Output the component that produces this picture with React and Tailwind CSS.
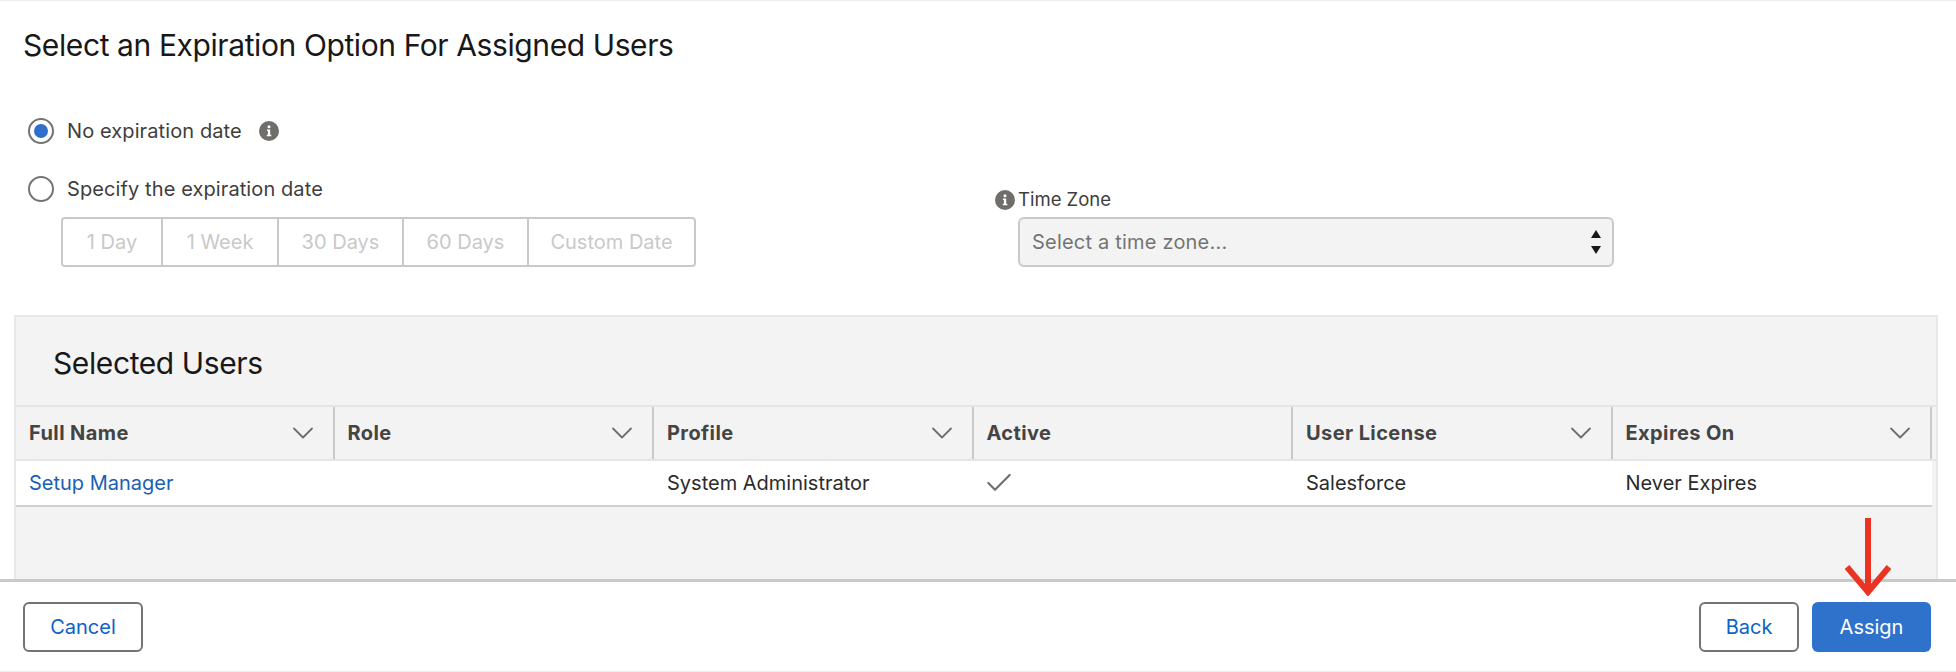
import { ChevronDown, Check } from 'lucide-react';

const font = { fontFamily: 'Inter, "Liberation Sans", sans-serif' };

const columns = [
  { label: 'Full Name', sortable: true },
  { label: 'Role', sortable: true },
  { label: 'Profile', sortable: true },
  { label: 'Active', sortable: false },
  { label: 'User License', sortable: true },
  { label: 'Expires On', sortable: true },
];

const durations = [
  { label: '1 Day', width: 'w-[100px]' },
  { label: '1 Week', width: 'w-[116px]' },
  { label: '30 Days', width: 'w-[125px]' },
  { label: '60 Days', width: 'w-[125px]' },
  { label: 'Custom Date', width: 'w-[167px]' },
];

const InfoIcon = () => (
  <svg width="20" height="20" viewBox="0 0 20 20" className="shrink-0">
    <circle cx="10" cy="10" r="10" fill="#706e6b" />
    <circle cx="10" cy="5.8" r="1.5" fill="#fff" />
    <path d="M8 8.6h3.2v5.2h1.1v1.5H7.8v-1.5h1.1v-3.7H8z" fill="#fff" />
  </svg>
);

const Radio = ({ checked }) => (
  <span className="w-[26px] h-[26px] rounded-full border-2 border-[#747474] bg-white flex items-center justify-center shrink-0">
    {checked && <span className="w-[14px] h-[14px] rounded-full bg-[#2f6fca]" />}
  </span>
);

export default function App() {
  return (
    <div style={font} className="relative w-[1956px] h-[672px] bg-white flex flex-col overflow-hidden text-[#3e3e3c] border-t border-[#ececec]">
      <div className="flex-1 min-h-0 flex flex-col">
        <h1 className="ml-[23px] mt-[26px] h-[36px] leading-[36px] text-[30px] tracking-[-0.4px] text-[#181818]">
          Select an Expiration Option For Assigned Users
        </h1>

        <div className="mt-[55px] flex items-start">
          <div className="ml-[28px] w-[977px] shrink-0">
            <div className="flex items-center h-[26px] gap-[13px]">
              <Radio checked />
              <span className="text-[20px] leading-none tracking-[0.1px]">No expiration date</span>
              <span className="ml-[4px]"><InfoIcon /></span>
            </div>
            <div className="flex items-center h-[26px] gap-[13px] mt-[32px]">
              <Radio />
              <span className="text-[20px] leading-none tracking-[0.1px]">Specify the expiration date</span>
            </div>
            <div className="ml-[33px] mt-[15px] flex h-[50px] border-2 border-[#c9c9c9] rounded-[4px] w-[635px]">
              {durations.map((d, i) => (
                <div
                  key={d.label}
                  className={`${d.width} flex items-center justify-center text-[20px] text-[#c9c9c9] ${i < durations.length - 1 ? 'border-r-2 border-[#c9c9c9]' : 'flex-1'}`}
                >
                  {d.label}
                </div>
              ))}
            </div>
          </div>

          <div className="mt-[69px]">
            <div className="flex items-center gap-[3px] h-[26px] -ml-[10px]">
              <InfoIcon />
              <span className="text-[18.5px]">Time Zone</span>
            </div>
            <div className="ml-[13px] mt-[4px] w-[596px] h-[50px] rounded-[6px] border-2 border-[#c9c9c9] bg-[#f3f3f3] flex items-center justify-between pl-[12px] pr-[10px]">
              <span className="text-[20px] tracking-[0.2px] text-[#747474]">Select a time zone...</span>
              <svg width="12" height="30" viewBox="0 0 12 30">
                <path d="M6 3l5 8H1z" fill="#181818" />
                <path d="M6 27l5-8H1z" fill="#181818" />
              </svg>
            </div>
          </div>
        </div>

        <section className="ml-[14px] mr-[18px] mt-[48px] flex-1 min-h-0 bg-[#f3f3f3] border-t-2 border-x-2 border-[#e8e8e8]">
          <h2 className="pl-[37px] h-[88px] pt-[4px] flex items-center text-[30px] tracking-[-0.4px] text-[#181818]">Selected Users</h2>

          <div className="grid grid-cols-[318.5px_319.5px_319.5px_319.5px_319.5px_319.5px] border-t-2 border-[#e5e5e5] h-[56px] border-b-2">
            {columns.map((c) => (
              <div key={c.label} className="flex items-center justify-between pl-[13px] pr-[12px] h-[52px] border-r-2 border-[#c9c9c9]">
                <span className="text-[20px] font-bold tracking-[0.4px] text-[#444444]">{c.label}</span>
                {c.sortable && <ChevronDown size={36} strokeWidth={1.2} className="text-[#706e6b]" />}
              </div>
            ))}
          </div>

          <div className="grid grid-cols-[318.5px_319.5px_319.5px_319.5px_319.5px_319.5px] bg-white h-[46px] border-b-2 border-[#d0d0d0] items-center text-[20px] text-[#2b2b2b] w-[1916px]">
            <a className="pl-[13px] text-[#1b5fb3]">Setup Manager</a>
            <span />
            <span className="pl-[13px]">System Administrator</span>
            <span className="pl-[9px]"><Check size={32} strokeWidth={1.6} className="text-[#706e6b]" /></span>
            <span className="pl-[13px]">Salesforce</span>
            <span className="pl-[13px]">Never Expires</span>
          </div>
        </section>
      </div>

      <footer className="h-[93px] shrink-0 border-t-[3px] border-[#c9c9c9] border-b border-b-[#ececec] bg-white flex items-start justify-between pt-[20px] pl-[23px] pr-[25px]">
        <button className="w-[120px] h-[50px] rounded-[6px] border-2 border-[#747474] text-[20px] text-[#0b62c9]">Cancel</button>
        <div className="flex gap-[13px]">
          <button className="w-[100px] h-[50px] rounded-[6px] border-2 border-[#747474] text-[20px] text-[#0b62c9]">Back</button>
          <button className="w-[119px] h-[50px] rounded-[6px] bg-[#2f72cc] text-[20px] text-white">Assign</button>
        </div>
      </footer>

      <svg width="52" height="78" viewBox="0 0 52 78" className="absolute left-[1842px] top-[517px]">
        <path d="M26 0v72M5 49l21 25 21-25" fill="none" stroke="#ea3323" strokeWidth="6" />
      </svg>
    </div>
  );
}
